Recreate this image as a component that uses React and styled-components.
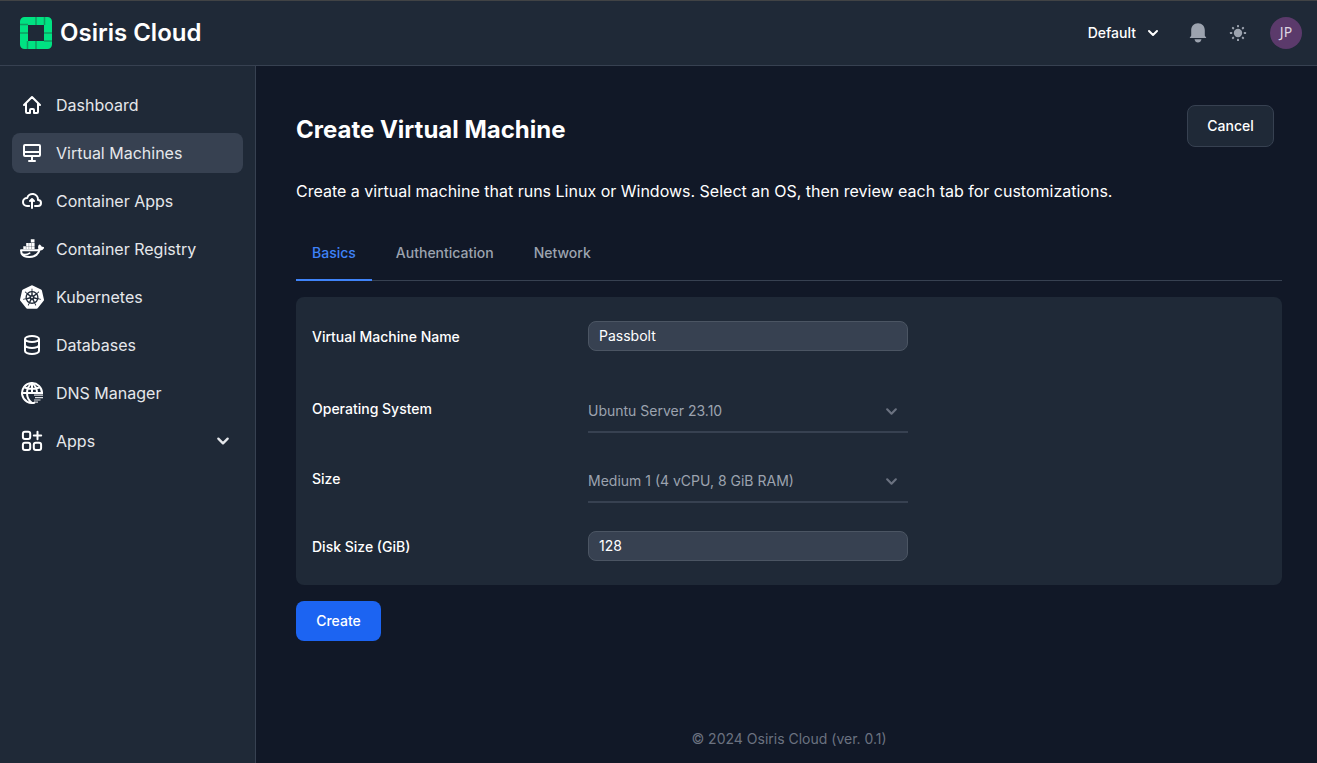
import React from "react";
import styled, { createGlobalStyle } from "styled-components";
import { SiKubernetes } from "react-icons/si";

const GlobalStyle = createGlobalStyle`
  *, *::before, *::after { box-sizing: border-box; }
  body {
    margin: 0;
    background: #111827;
    color: #fff;
    font-family: Inter, "Liberation Sans", sans-serif;
    font-size: 14px;
    line-height: 20px;
  }
  button, input { font: inherit; color: inherit; }
`;

const Page = styled.div`
  height: 763px;
  display: flex;
  flex-direction: column;
  overflow: hidden;
`;

const Header = styled.header`
  height: 66px;
  flex: none;
  display: flex;
  align-items: center;
  justify-content: space-between;
  padding: 0 15px 0 20px;
  background: #1f2937;
  border-top: 1px solid #414345;
  border-bottom: 1px solid #374151;
`;

const Brand = styled.div`
  display: flex;
  align-items: center;
  gap: 8px;
  font-size: 24px;
  line-height: 32px;
  font-weight: 600;
`;

const Tools = styled.div`
  display: flex;
  align-items: center;
`;

const ProjectButton = styled.button`
  display: flex;
  align-items: center;
  gap: 11px;
  padding: 0;
  margin-right: 29px;
  border: 0;
  background: none;
  font-weight: 500;
`;

const IconButton = styled.button`
  display: flex;
  padding: 0;
  margin-right: ${(p) => p.$gap}px;
  border: 0;
  background: none;
  color: #9ca3af;
`;

const Avatar = styled.div`
  width: 32px;
  height: 32px;
  border-radius: 50%;
  display: grid;
  place-items: center;
  padding-bottom: 2px;
  background: #5b3a6b;
  color: #ded5e2;
  font-family: "Noto Sans", sans-serif;
  font-size: 14px;
`;

const Body = styled.div`
  flex: 1;
  display: flex;
  min-height: 0;
`;

const Sidebar = styled.nav`
  width: 256px;
  flex: none;
  display: flex;
  flex-direction: column;
  gap: 8px;
  padding: 19px 12px;
  background: #1f2937;
  border-right: 1px solid #374151;
`;

const NavItem = styled.a`
  height: 40px;
  display: flex;
  align-items: center;
  gap: 12px;
  padding: 0 13px 0 8px;
  border-radius: 8px;
  background: ${(p) => (p.$active ? "#374151" : "transparent")};
  color: #e5e7eb;
  font-size: 16px;
  line-height: 24px;
`;

const NavIcon = styled.span`
  width: 24px;
  height: 24px;
  display: flex;
  color: #fff;
`;

const NavLabel = styled.span`
  flex: 1;
`;

const Main = styled.main`
  flex: 1;
  display: flex;
  flex-direction: column;
  align-items: stretch;
  padding: 39px 35px 14px 40px;
`;

const TitleRow = styled.div`
  display: flex;
  justify-content: space-between;
  align-items: flex-start;
  padding-right: 8px;
`;

const Title = styled.h1`
  margin: 9px 0 0;
  font-size: 24px;
  line-height: 32px;
  font-weight: 700;
`;

const Intro = styled.p`
  margin: 32px 0 0;
  font-size: 16px;
  line-height: 24px;
`;

const Button = styled.button`
  height: ${(p) => (p.$primary ? 40 : 42)}px;
  min-width: ${(p) => (p.$primary ? 85 : 87)}px;
  padding: 0 19px;
  border-radius: 8px;
  border: ${(p) => (p.$primary ? "0" : "1px solid #374151")};
  background: ${(p) => (p.$primary ? "#1c64f2" : "#1f2937")};
  font-weight: 500;
`;

const Tabs = styled.div`
  display: flex;
  gap: 8px;
  height: 55px;
  margin-top: 23px;
  border-bottom: 1px solid #374151;
`;

const Tab = styled.button`
  height: 55px;
  padding: 1px 16px 0;
  border: 0;
  border-bottom: 2px solid ${(p) => (p.$active ? "#3f83f8" : "transparent")};
  background: none;
  color: ${(p) => (p.$active ? "#3f83f8" : "#9ca3af")};
  font-weight: 500;
`;

const Form = styled.form`
  display: flex;
  flex-direction: column;
  height: 288px;
  margin: 16px 0;
  padding: 24px 16px;
  border-radius: 8px;
  background: #1f2937;
`;

const Field = styled.div`
  display: flex;
  flex: none;
  align-items: flex-start;
  height: ${(p) => p.$height}px;
  margin-bottom: ${(p) => p.$gap}px;
`;

const Label = styled.label`
  width: 276px;
  padding-top: ${(p) => p.$top}px;
  font-weight: 500;
`;

const TextInput = styled.input`
  width: 320px;
  height: 30px;
  padding: 0 10px 2px;
  border: 1px solid #4b5563;
  border-radius: 8px;
  background: #374151;
`;

const Select = styled.div`
  width: 320px;
  height: 42px;
  display: flex;
  align-items: center;
  justify-content: space-between;
  padding-right: 10px;
  border-bottom: 2px solid #374151;
  color: #9ca3af;
`;

const SelectArrow = styled.span`
  display: flex;
  color: #6b7280;
`;

const Actions = styled.div`
  display: flex;
`;

const Footer = styled.footer`
  margin-top: auto;
  text-align: center;
  color: #6b7280;
`;

const Outline = ({ children }) => (
  <svg width="24" height="24" viewBox="0 0 24 24" fill="none" stroke="currentColor" strokeWidth="2" strokeLinecap="round" strokeLinejoin="round">
    {children}
  </svg>
);

const Chevron = ({ size = 10 }) => (
  <svg width={size + 2} height={size + 2} viewBox="-1 -1 12 12" fill="none" stroke="currentColor" strokeWidth="2" strokeLinecap="round" strokeLinejoin="round">
    <path d="m1 3 4 4 4-4" />
  </svg>
);

const Logo = () => (
  <svg width="32" height="32" viewBox="0 0 32 32">
    <path fill="#00e282" fillRule="evenodd" d="M4.500 0h23A4.500 4.500 0 0 1 32 4.500v23a4.500 4.500 0 0 1-4.500 4.500h-23A4.500 4.500 0 0 1 0 27.500v-23A4.500 4.500 0 0 1 4.500 0ZM8 8v16h16V8Z" />
    <path stroke="#0f9c62" strokeWidth="1.500" d="M16 0v8M24.500 0v8M0 7.500h8M0 16h8M24 16h8M24 24h8M7.500 24v8M16 24v8" />
  </svg>
);

const Bell = () => (
  <svg width="20" height="20" viewBox="0 0 20 20" fill="currentColor">
    <path d="M10 .3C5.800.3 3.200 3.300 3.200 7.200v5.100c0 .5-.2.9-.5 1.200-.5.500-.9.700-.9 1.500h16.400c0-.8-.4-1-.9-1.500-.3-.3-.5-.7-.5-1.200V7.200C16.800 3.300 14.200.3 10 .3ZM6.500 16.200h7c-.3 2-1.800 3.300-3.500 3.300s-3.200-1.300-3.500-3.300Z" />
  </svg>
);

const Sun = () => (
  <svg width="18" height="18" viewBox="-9 -9 18 18" fill="currentColor">
    <circle r="4.200" />
    {[0, 45, 90, 135, 180, 225, 270, 315].map((a) => (
      <rect key={a} x="5.800" y="-1" width="2.300" height="2" rx=".6" transform={`rotate(${a})`} />
    ))}
  </svg>
);

const Whale = () => (
  <svg width="24" height="24" viewBox="0 0 24 24">
    <path fill="currentColor" d="M3.300 9.300h2.600v3H3.300zM6.200 9.300h2.600v3H6.200zM9.100 9.300h2.600v3H9.100zM12 9.300h2.600v3H12zM6.200 6h2.600v2.900H6.200zM9.100 6h2.600v2.900H9.100zM12 6h2.600v2.900H12zM10.800 2.300h3.700v3.300h-3.700z" />
    <path fill="none" stroke="currentColor" strokeWidth="2" strokeLinejoin="round" d="M1 13.300h16.300c1.300 0 2-.5 2.200-1.500-.7-1.200-.5-2.200.1-3.200.9.600 1.300 1.300 1.400 2 .8-.1 1.500 0 2.100.3-.6 1.400-1.800 1.900-3.400 1.900C18.300 17.300 15 20 9.300 20 4 20 1 18.300 1 13.300Z" />
    <path fill="none" stroke="currentColor" strokeWidth="1.700" strokeLinecap="round" d="M3.200 17.400c2.600.5 4.500 0 6.500-1.300" />
  </svg>
);

const Globe = () => (
  <svg width="24" height="24" viewBox="0 0 24 24" fill="none" stroke="currentColor" strokeWidth="2">
    <path d="M22 12.500A10 10 0 1 0 15 21.600" />
    <path d="M12 2C8.500 4.500 7 8 7 12s1.500 7.500 5 10M12 2c3.500 2.500 5 6 5 10M12 2v10M2 12h21M4.500 6.500c4.600 1.600 10.400 1.600 15 0" />
    <path strokeWidth="1.200" opacity=".85" d="M14 14.200h9M15 16.600h8M14 19h6.500M14 21.200h4" />
  </svg>
);

const navigation = [
  { label: "Dashboard", icon: <Outline><path d="m4 12 8-8 8 8M6 10.500V19a1 1 0 0 0 1 1h3v-3a1 1 0 0 1 1-1h2a1 1 0 0 1 1 1v3h3a1 1 0 0 0 1-1v-8.500" /></Outline> },
  { label: "Virtual Machines", active: true, icon: <Outline><path d="M12 15v5m-3 0h6M4 11h16M5 15h14a1 1 0 0 0 1-1V5a1 1 0 0 0-1-1H5a1 1 0 0 0-1 1v9a1 1 0 0 0 1 1Z" /></Outline> },
  { label: "Container Apps", icon: <Outline><path d="M15 17h3a3 3 0 0 0 0-6h-.025a5.560 5.560 0 0 0 .025-.5A5.500 5.500 0 0 0 7.207 9.021C7.137 9.017 7.071 9 7 9a4 4 0 1 0 0 8h2.167M12 19v-9m0 0-2 2m2-2 2 2" /></Outline> },
  { label: "Container Registry", icon: <Whale /> },
  { label: "Kubernetes", icon: <SiKubernetes size={24} /> },
  { label: "Databases", icon: <Outline><path d="M19 6c0 1.657-3.134 3-7 3S5 7.657 5 6m14 0c0-1.657-3.134-3-7-3S5 4.343 5 6m14 0v12c0 1.657-3.134 3-7 3s-7-1.343-7-3V6m14 6c0 1.657-3.134 3-7 3s-7-1.343-7-3" /></Outline> },
  { label: "DNS Manager", icon: <Globe /> },
  { label: "Apps", expandable: true, icon: <Outline><rect x="2.900" y="2.800" width="7.300" height="7.300" rx="2" /><rect x="2.900" y="13.800" width="7.300" height="7.300" rx="2" /><rect x="13.800" y="13.800" width="7.300" height="7.300" rx="2" /><path d="M17.500 2.800v7.400M13.800 6.500h7.400" /></Outline> },
];

export default function App() {
  return (
    <Page>
      <GlobalStyle />
      <Header>
        <Brand><Logo />Osiris Cloud</Brand>
        <Tools>
          <ProjectButton>Default <Chevron /></ProjectButton>
          <IconButton $gap={21} aria-label="Notifications"><Bell /></IconButton>
          <IconButton $gap={23} aria-label="Toggle theme"><Sun /></IconButton>
          <Avatar>JP</Avatar>
        </Tools>
      </Header>
      <Body>
        <Sidebar>
          {navigation.map((item) => (
            <NavItem key={item.label} $active={item.active}>
              <NavIcon>{item.icon}</NavIcon>
              <NavLabel>{item.label}</NavLabel>
              {item.expandable && <Chevron size={12} />}
            </NavItem>
          ))}
        </Sidebar>
        <Main>
          <TitleRow>
            <Title>Create Virtual Machine</Title>
            <Button>Cancel</Button>
          </TitleRow>
          <Intro>Create a virtual machine that runs Linux or Windows. Select an OS, then review each tab for customizations.</Intro>
          <Tabs>
            <Tab $active>Basics</Tab>
            <Tab>Authentication</Tab>
            <Tab>Network</Tab>
          </Tabs>
          <Form>
            <Field $height={42} $gap={28}>
              <Label $top={6}>Virtual Machine Name</Label>
              <TextInput defaultValue="Passbolt" />
            </Field>
            <Field $height={42} $gap={28}>
              <Label $top={8}>Operating System</Label>
              <Select>Ubuntu Server 23.10<SelectArrow><Chevron size={11} /></SelectArrow></Select>
            </Field>
            <Field $height={42} $gap={28}>
              <Label $top={8}>Size</Label>
              <Select>Medium 1 (4 vCPU, 8 GiB RAM)<SelectArrow><Chevron size={11} /></SelectArrow></Select>
            </Field>
            <Field $height={30} $gap={0}>
              <Label $top={6}>Disk Size (GiB)</Label>
              <TextInput defaultValue="128" />
            </Field>
          </Form>
          <Actions><Button $primary>Create</Button></Actions>
          <Footer>© 2024 Osiris Cloud (ver. 0.1)</Footer>
        </Main>
      </Body>
    </Page>
  );
}
